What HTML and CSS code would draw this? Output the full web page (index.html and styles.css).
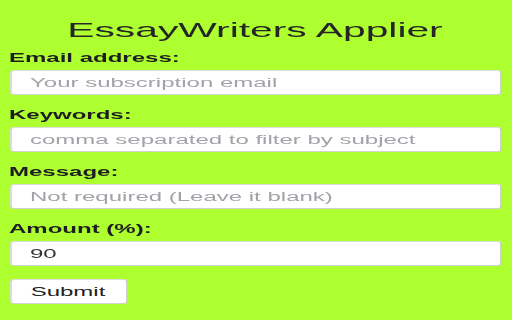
FILE: index.html
```html
<!DOCTYPE html>
<html lang="en">
<head>
<meta charset="utf-8">
<title>EssayWriters Applier</title>
<link rel="stylesheet" href="styles.css">
</head>
<body>
<div class="page">
  <h1 class="title">EssayWriters Applier</h1>
  <form class="form">
    <div class="field">
      <label class="label" for="email">Email address:</label>
      <input class="input" id="email" type="text" placeholder="Your subscription email">
    </div>
    <div class="field">
      <label class="label" for="keywords">Keywords:</label>
      <input class="input" id="keywords" type="text" placeholder="comma separated to filter by subject">
    </div>
    <div class="field">
      <label class="label" for="message">Message:</label>
      <input class="input" id="message" type="text" placeholder="Not required (Leave it blank)">
    </div>
    <div class="field">
      <label class="label" for="amount">Amount (%):</label>
      <input class="input" id="amount" type="text" value="90">
    </div>
    <button class="submit" type="button">Submit</button>
  </form>
</div>
</body>
</html>
```

FILE: styles.css
```css
html, body {
  margin: 0;
  padding: 0;
  background: #adff2f;
  height: 100%;
  overflow: hidden;
}

.page {
  width: 256px;
  box-sizing: border-box;
  padding: 18px 5.5px 0 4.5px;
  transform: scaleX(2);
  transform-origin: 0 0;
  font-family: "Liberation Sans", Arial, sans-serif;
  color: #222;
}

.title {
  margin: 0 0 9px 0;
  font-size: 20.4px;
  line-height: 24px;
  font-weight: normal;
  text-align: center;
  color: #262626;
}

.form {
  display: flex;
  flex-direction: column;
  margin: 0;
}

.field {
  display: flex;
  flex-direction: column;
  margin-bottom: 13px;
}

.label {
  font-size: 12px;
  line-height: 14px;
  font-weight: bold;
  color: #1e1e22;
  margin-bottom: 5px;
}

.input {
  box-sizing: border-box;
  height: 25px;
  width: 100%;
  margin: 0;
  padding: 0 9.5px;
  border: 1px solid #dcdcdc;
  border-right-color: #cfcfcf;
  border-bottom-color: #d2d2d2;
  border-radius: 2px / 4px;
  background: #fff;
  font-family: "Liberation Sans", Arial, sans-serif;
  font-size: 12px;
  color: #333;
  outline: none;
}

.input::placeholder {
  color: #a2a2a8;
  opacity: 1;
}

.submit {
  align-self: flex-start;
  box-sizing: border-box;
  height: 25px;
  width: 59px;
  margin: 0;
  padding: 0;
  border: 1px solid #dcdcdc;
  border-right-color: #cfcfcf;
  border-bottom-color: #d2d2d2;
  border-radius: 2px / 4px;
  background: #fff;
  font-family: "Liberation Sans", Arial, sans-serif;
  font-size: 12px;
  color: #222;
  text-align: center;
}
```
